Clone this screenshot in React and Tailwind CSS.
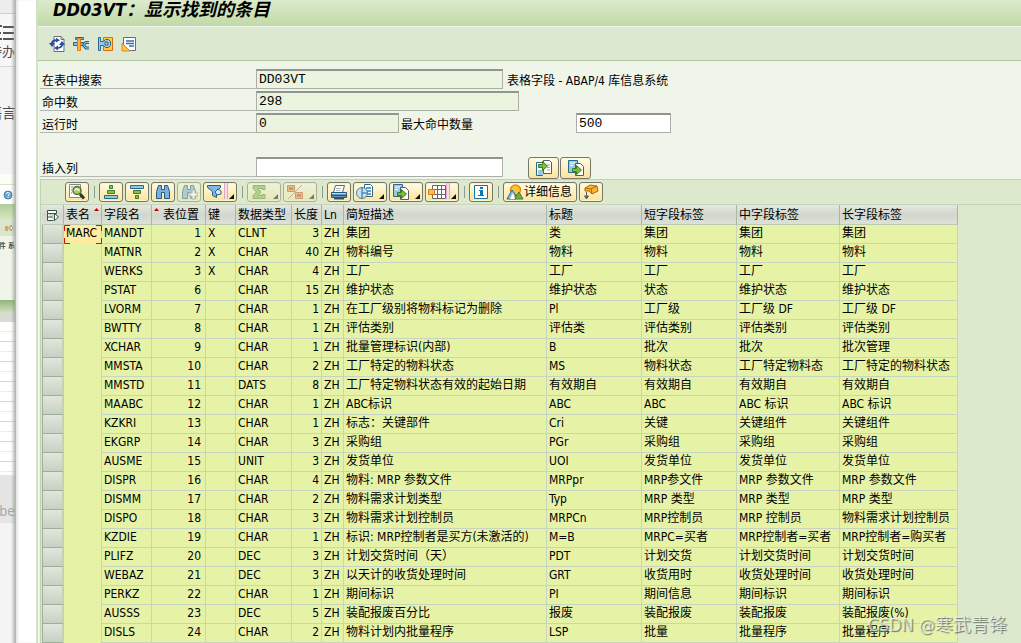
import React from "react";

const ROWS = [
  ["MANDT", 1, "X", "CLNT", 3, "集团", "类", "集团", "集团", "集团"],
  ["MATNR", 2, "X", "CHAR", 40, "物料编号", "物料", "物料", "物料", "物料"],
  ["WERKS", 3, "X", "CHAR", 4, "工厂", "工厂", "工厂", "工厂", "工厂"],
  ["PSTAT", 6, "", "CHAR", 15, "维护状态", "维护状态", "状态", "维护状态", "维护状态"],
  ["LVORM", 7, "", "CHAR", 1, "在工厂级别将物料标记为删除", "Pl", "工厂级", "工厂级 DF", "工厂级 DF"],
  ["BWTTY", 8, "", "CHAR", 1, "评估类别", "评估类", "评估类别", "评估类别", "评估类别"],
  ["XCHAR", 9, "", "CHAR", 1, "批量管理标识(内部)", "B", "批次", "批次", "批次管理"],
  ["MMSTA", 10, "", "CHAR", 2, "工厂特定的物料状态", "MS", "物料状态", "工厂特定物料态", "工厂特定的物料状态"],
  ["MMSTD", 11, "", "DATS", 8, "工厂特定物料状态有效的起始日期", "有效期自", "有效期自", "有效期自", "有效期自"],
  ["MAABC", 12, "", "CHAR", 1, "ABC标识", "ABC", "ABC", "ABC 标识", "ABC 标识"],
  ["KZKRI", 13, "", "CHAR", 1, "标志：关键部件", "Cri", "关键", "关键组件", "关键组件"],
  ["EKGRP", 14, "", "CHAR", 3, "采购组", "PGr", "采购组", "采购组", "采购组"],
  ["AUSME", 15, "", "UNIT", 3, "发货单位", "UOI", "发货单位", "发货单位", "发货单位"],
  ["DISPR", 16, "", "CHAR", 4, "物料: MRP 参数文件", "MRPpr", "MRP参文件", "MRP 参数文件", "MRP 参数文件"],
  ["DISMM", 17, "", "CHAR", 2, "物料需求计划类型", "Typ", "MRP 类型", "MRP 类型", "MRP 类型"],
  ["DISPO", 18, "", "CHAR", 3, "物料需求计划控制员", "MRPCn", "MRP控制员", "MRP 控制员", "物料需求计划控制员"],
  ["KZDIE", 19, "", "CHAR", 1, "标识: MRP控制者是买方(未激活的)", "M=B", "MRPC=买者", "MRP控制者=买者", "MRP控制者=购买者"],
  ["PLIFZ", 20, "", "DEC", 3, "计划交货时间（天）", "PDT", "计划交货", "计划交货时间", "计划交货时间"],
  ["WEBAZ", 21, "", "DEC", 3, "以天计的收货处理时间", "GRT", "收货用时", "收货处理时间", "收货处理时间"],
  ["PERKZ", 22, "", "CHAR", 1, "期间标识", "PI", "期间信息", "期间标识", "期间标识"],
  ["AUSSS", 23, "", "DEC", 5, "装配报废百分比", "报废", "装配报废", "装配报废", "装配报废(%)"],
  ["DISLS", 24, "", "CHAR", 2, "物料计划内批量程序", "LSP", "批量", "批量程序", "批量程序"],
];

function Icon({ children, w = 18 }) {
  return (
    <svg width={w} height="16" viewBox={`0 0 ${w} 16`} className="shrink-0" aria-hidden="true">
      {children}
    </svg>
  );
}

const Refresh = () => (
  <Icon w={16}>
    <path d="M5 .5h7l3 3v12H5z" fill="#fff" stroke="#6d6d78" />
    <path d="M12 .5v3h3" fill="none" stroke="#6d6d78" />
    <path d="M2.500 8.500Q3 4 8 4.200M13.500 7.500Q13 12 8 12" fill="none" stroke="#2450a0" strokeWidth="2" />
    <path d="M0 7h6l-3 4zM10 9h6l-3-4zM7 1.800l4 2.400-4 2.400zM9 9.600l-4 2.400 4 2.400z" fill="#2450a0" />
  </Icon>
);
const Wrench = () => (
  <Icon w={16}>
    <path d="M2.500 1.500h8v2h-8z" fill="#8db9d9" stroke="#286792" />
    <path d="M.5 6.500h10v3H.5z" fill="#8db9d9" stroke="#286792" />
    <path d="M16 6.500h-3l-2 1.500v2l2 2h3" fill="none" stroke="#286792" strokeWidth="3" />
    <path d="M16 6.500h-3l-2 1.500v2l2 2h3" fill="none" stroke="#9cc6e1" />
    <path d="M4.500 2.500h3v12h-3z" fill="#ffb638" stroke="#e07b08" />
  </Icon>
);
const Match = () => (
  <Icon w={16}>
    <path d="M6.500 1.500h9v13h-9z" fill="#ffc94a" stroke="#dc6b12" />
    <path d="M1.500 1.500h2v4h3l2-2h3l2 2v4l-2 2h-3l-2-2h-3v5h-2z" fill="#9ec8df" stroke="#286792" />
    <path d="M8 6h3v3H8z" fill="#ffc94a" stroke="#286792" />
  </Icon>
);
const Note = () => (
  <Icon w={16}>
    <path d="M2.500 1.500h12v13h-12z" fill="#fff" stroke="#6d6d78" />
    <path d="M5 5h8M5 7.500h8M8 10h5" stroke="#376fac" strokeWidth="1.500" />
    <path d="M1 7v8h8z" fill="#ffc24c" stroke="#db8b18" />
  </Icon>
);
const Detail = () => (
  <Icon>
    <path d="M1.500.5h11v13h-11z" fill="#fff" stroke="#86868e" />
    <path d="M3 3h2M3 6h1M3 9h1" stroke="#777" />
    <circle cx="9" cy="6.500" r="4" fill="#a9cf61" stroke="#52732d" strokeWidth="1.500" />
    <path d="M6 7l3-3v2h3" fill="none" stroke="#fff" />
    <path d="M12 10l4 4.500" stroke="#333" strokeWidth="3" />
  </Icon>
);
const Asc = () => (
  <Icon>
    <path d="M7.500 1.500h3v3h-3zM5.500 6.500h7v3h-7z" fill="#8ac33c" stroke="#397d37" />
    <path d="M2.500 11.500h13v3h-13z" fill="#9ac5dc" stroke="#286a8d" />
  </Icon>
);
const Desc = () => (
  <Icon>
    <path d="M2.500 1.500h13v3h-13z" fill="#9ac5dc" stroke="#286a8d" />
    <path d="M5.500 6.500h7v3h-7zM7.500 11.500h3v3h-3z" fill="#8ac33c" stroke="#397d37" />
  </Icon>
);
const BinoShape = () => (
  <path d="M4.500 1.500h3v4h3v-4h3l2 6v7h-5v-6h-3v6h-5v-7z" fill="#7faeda" stroke="#1f5c8c" />
);
const Find = () => <Icon><BinoShape /></Icon>;
const FindNext = () => (
  <Icon>
    <BinoShape />
    <path d="M12 6h3v3h3v3h-3v3h-3v-3H9V9h3z" fill="#fff" stroke="#7a8992" />
  </Icon>
);
const Filter = () => (
  <Icon>
    <path d="M1.500 1.500h13v2l-4 4v6l-4-2v-4l-5-4z" fill="#83b6dc" stroke="#205f91" />
    <path d="M9 8l3-3 3 2v3l-4 1z" fill="#dcebf5" stroke="#205f91" />
  </Icon>
);
const Sum = () => (
  <Icon>
    <path d="M3 1.500h12v4h-3v-1H8l3 3.500-3 3.500h4v-1h3v4H3v-3l3.500-3.500L3 4.500z" fill="#8abb45" stroke="#4a8c34" />
  </Icon>
);
const Sub = () => (
  <Icon>
    <path d="M1.500 1.500h7v6h-7zM9.500 8.500h7v6h-7z" fill="#ee9a35" stroke="#c94b20" />
    <path d="M3 4.500h4M11 11.500h4" stroke="#a92a1d" strokeWidth="2" />
    <path d="M2 15L16 1" stroke="#9b7d7d" />
  </Icon>
);
const Print = () => (
  <Icon>
    <path d="M5.500 1.500h9l-2 7h-9z" fill="#fff" stroke="#4e6c84" />
    <path d="M6 4.500h5M6 6.500h4" stroke="#a5b5c4" />
    <path d="M1.500 8.500h15v5h-15z" fill="#b9d8eb" stroke="#20577e" />
    <path d="M2 11.500h14M4 14.500h10" stroke="#20577e" strokeWidth="2" />
  </Icon>
);
const View = () => (
  <Icon>
    <path d="M8.500.5h6l2 2v10h-8z" fill="#fff" stroke="#29658c" />
    <path d="M10 4h5M10 7h5M10 10h5" stroke="#347aac" strokeWidth="1.500" />
    <circle cx="6" cy="9" r="5.500" fill="#c8e1ef" stroke="#56829d" />
    <path d="M6 3.500v11M6 9h5" stroke="#286a8d" />
  </Icon>
);
const Export = () => (
  <Icon>
    <path d="M1.500.5h9v12h-9z" fill="#9fc7df" stroke="#286a8d" />
    <path d="M3 3h5M3 5.500h3" stroke="#fff" />
    <path d="M8.500 3.500h5l3 3v9h-8z" fill="#fff" stroke="#555b60" />
    <path d="M5.500 8.500h4v-3l5 4.500-5 4.500v-3h-4z" fill="#81bd31" stroke="#397d27" />
  </Icon>
);
const Import = () => (
  <Icon>
    <path d="M1.500 2.500h6v13h-6z" fill="#fff" stroke="#286a8d" />
    <path d="M3 10h5v5H3z" fill="#9fc7df" />
    <path d="M8.500.5h6l2 2v11h-8z" fill="#fff" stroke="#555b60" />
    <path d="M12 5h3M12 7.500h3M12 10h3" stroke="#9da9b3" />
    <path d="M3.500 4.500h4v-3l5 4.500-5 4.500v-3h-4z" fill="#81bd31" stroke="#397d27" />
  </Icon>
);
const Layout = () => (
  <Icon>
    <path d="M4.500 1.500h13v13h-13zM9.500 1.500v13M13.500 1.500v13M4.500 5.500h13M4.500 10.500h13" fill="#fff" stroke="#666" />
    <path d="M.5 5.500h6v5h-6z" fill="#ffbd52" stroke="#dd7516" />
  </Icon>
);
const Info = () => (
  <Icon>
    <path d="M2.500 1.500h13v13h-13z" fill="#fff" stroke="#0e76a8" />
    <path d="M8 3h3v2H8zM7 6h4v5h1v1H6v-1h2V7H7z" fill="#0b78b4" />
  </Icon>
);
const Scene = () => (
  <Icon>
    <circle cx="9.500" cy="6" r="5" fill="#ffc530" stroke="#ee8617" strokeWidth="1.500" />
    <path d="M1 15L6 6l3 4 1 5z" fill="#8bbedf" stroke="#286a9c" />
    <path d="M8 15l5-7 4 7z" fill="#72ad45" stroke="#397d37" />
    <path d="M4 15l3-6 2 6z" fill="#fff" />
  </Icon>
);
const Truck = () => (
  <Icon>
    <path d="M3 4l5-3 7 1 1 5-6 3-3-3H3z" fill="#ffb52b" stroke="#a76a09" />
    <path d="M3 4l6 1 1 5M9 5l6-3" fill="none" stroke="#a76a09" />
    <path d="M4.500 8v6M2.500 12h4l-2 3z" fill="#58616a" stroke="#58616a" />
  </Icon>
);

function Tool({ label, icon: Glyph, menu, stripe, disabled, children }) {
  return (
    <button
      type="button"
      aria-label={label}
      disabled={disabled}
      className="flex h-5 min-w-6 items-center rounded-[3px] border border-[#77766b] bg-linear-to-b from-[#fffbe4] to-[#fbe398] px-0.5 shadow-[inset_0_0_0_1px_#fff3c4] disabled:opacity-50"
    >
      <Glyph />
      {menu && (
        <span className="flex h-full w-2.5 items-end justify-end pb-0.5">
          {stripe && <span className="mr-px h-4 w-1 border-x border-[#dfa3d0] bg-[#f7dfdf]" />}
          <svg width="5" height="5" viewBox="0 0 5 5" className="shrink-0" aria-hidden="true">
            <path d="M5 0v5H0z" fill="#111" />
          </svg>
        </span>
      )}
      {children}
    </button>
  );
}

const Sep = () => (
  <span className="flex w-1.5 justify-center">
    <span className="h-3 w-px bg-[#929b8b]" />
  </span>
);

const MainTool = ({ label, icon: Glyph }) => (
  <button type="button" aria-label={label} className="flex">
    <Glyph />
  </button>
);

const FIELD =
  "h-5 border border-t-2 border-[#abaea7] border-t-[#92958f] px-0.5 font-['Liberation_Mono','Noto_Sans_CJK_SC',monospace] text-[13px] leading-4 outline-none";

function Label({ id, children }) {
  return (
    <label htmlFor={id} className="h-5 w-[216px] shrink-0 border-b border-[#b5b8b1] pl-0.5">
      {children}
    </label>
  );
}

const TH =
  "h-5 overflow-hidden border-b border-r border-b-[#bccab4] border-r-[#abb5a4] bg-linear-to-b from-[#e4e8df] via-[#d1d7cd] to-[#dde1d8] px-0.5 pt-px pb-0 text-left font-normal leading-[18px]";
const TD = "h-[19px] overflow-visible border-b border-r border-[#c7d4bf] bg-[#e6f3a7] px-0.5 pt-0 pb-0.5 leading-4";

const SortMark = () => (
  <svg width="5" height="3" viewBox="0 0 5 3" className="mt-0.5 shrink-0" aria-hidden="true">
    <path d="M2.500 0L5 3H0z" fill="#c00000" />
  </svg>
);

function Backdrop() {
  return (
    <aside className="relative w-4 shrink-0 overflow-hidden border-r border-[#aebba6] bg-[#f4f4f4] text-[13px] text-[#4b4b52]">
      <div className="h-3.5 border-b border-[#cfcfcf] bg-[#ededed]" />
      <div className="h-[53px] border-b border-[#d8d8d8] bg-[#f7f7f7] pt-2.5">
        <svg width="15" height="18" viewBox="0 0 15 18" aria-hidden="true">
          <path d="M0 2h2M3 3h11M0 9h1M3 9h11M0 15h2M3 15h11" stroke="#54545e" strokeWidth="2" />
        </svg>
        <div className="flex h-5 w-[15px] justify-end leading-5">
          <span className="whitespace-nowrap">待办</span>
        </div>
      </div>
      <div className="flex h-[107px] w-4 justify-end pt-9">
        <span className="text-[14px] leading-5 whitespace-nowrap">语言</span>
      </div>
      <div className="h-2.5 bg-[#fbfdf7]" />
      <div className="flex h-5 items-center justify-end border-t border-[#d8e6cd] bg-white pr-0.5">
        <svg width="10" height="10" viewBox="0 0 10 10" aria-hidden="true">
          <circle cx="5" cy="5" r="4" fill="#6fa5d0" stroke="#4a7fac" />
          <path d="M3.500 4q0-2 2-1.500t0 2.500v1M5 7v1" fill="none" stroke="#fff" />
        </svg>
      </div>
      <div className="h-4 bg-linear-to-b from-[#b0cd9b] to-[#d5e8c2]" />
      <div className="flex h-4 items-center bg-[#dbe6cf] pl-1">
        <svg width="10" height="8" viewBox="0 0 10 8" aria-hidden="true">
          <path d="M1 2h3v5H1z" fill="#f0a23a" />
          <path d="M5 3h2V1l2 3-2 3V5H5z" fill="#fff" stroke="#998" />
        </svg>
      </div>
      <div className="flex h-16 w-[15px] justify-end bg-[#eff5e9] pt-1">
        <span className="text-[7px] leading-3 font-bold whitespace-nowrap">件 系</span>
      </div>
      <div className="h-3 bg-linear-to-b from-[#93b47d] to-[#cae0b6]" />
      <div className="h-2.5 bg-[#d8dcd3]" />
      <div className="h-[153px] bg-white bg-[repeating-linear-gradient(to_bottom,#fff_0,#fff_9px,#ecefe6_9px,#ecefe6_10px,#fff_10px,#fff_19px,#d3dbca_19px,#d3dbca_20px)]" />
      <div className="flex h-12 items-center justify-end bg-[#e5e5e5] pt-6 text-[14px] text-[#a9a9a9]">
        <span className="leading-4">be</span>
      </div>
      <div className="absolute inset-y-0 right-0 w-1 bg-linear-to-r from-transparent to-[#8e958a]/60" />
    </aside>
  );
}

export default function App() {
  return (
    <div className="relative flex h-screen overflow-hidden bg-white font-['DejaVu_Sans_Condensed','Noto_Sans_CJK_SC',sans-serif] text-xs text-black">
      <Backdrop />
      <div className="w-5 shrink-0 bg-white shadow-[inset_2px_0_2px_#e4e7e2]" />
      <main className="flex min-w-0 grow flex-col border-l-2 border-[#d2e2c6] bg-[#eff5e9]">
        <header className="h-[27px] shrink-0 border-b border-[#f3f8ec] bg-linear-to-b from-[#dcebcc] to-[#c1d9a7] pl-[15px]">
          <h1 className="text-[18px] leading-5 font-bold italic">DD03VT：显示找到的条目</h1>
        </header>
        <div className="flex h-[34px] shrink-0 items-center gap-2 border-b border-[#b1c6a0] bg-[#dde8d0] pl-[11px]">
          <MainTool label="刷新" icon={Refresh} />
          <MainTool label="工具" icon={Wrench} />
          <MainTool label="匹配" icon={Match} />
          <MainTool label="注释" icon={Note} />
        </div>

        <section className="shrink-0 pt-2 pl-0.5 leading-6">
          <div className="flex h-[22px]">
            <Label id="table">在表中搜索</Label>
            <input id="table" readOnly defaultValue="DD03VT" className={`${FIELD} w-[247px] bg-[#ebf4df]`} />
            <span className="pl-1">表格字段 - ABAP/4 库信息系统</span>
          </div>
          <div className="flex h-[22px]">
            <Label id="hits">命中数</Label>
            <input id="hits" readOnly defaultValue="298" className={`${FIELD} w-[263px] bg-[#ebf4df]`} />
          </div>
          <div className="flex h-[22px]">
            <Label id="runtime">运行时</Label>
            <input id="runtime" readOnly defaultValue="0" className={`${FIELD} w-[143px] bg-[#ebf4df]`} />
            <label htmlFor="max" className="w-[177px] pl-0.5">最大命中数量</label>
            <input id="max" defaultValue="500" className={`${FIELD} w-[95px] bg-white`} />
          </div>
          <div className="mt-[22px] flex h-[22px]">
            <Label id="insert">插入列</Label>
            <input id="insert" className={`${FIELD} w-[247px] bg-white`} />
            <div className="ml-[25px] flex gap-px">
              <button type="button" aria-label="插入" className="flex h-[22px] w-[31px] items-center justify-center rounded-[3px] border border-[#77766b] bg-linear-to-b from-[#fffbe4] to-[#fbe398]">
                <Import />
              </button>
              <button type="button" aria-label="追加" className="flex h-[22px] w-[31px] items-center justify-center rounded-[3px] border border-[#77766b] bg-linear-to-b from-[#fffbe4] to-[#fbe398]">
                <Export />
              </button>
            </div>
          </div>
        </section>

        <section className="ml-0.5 grow border-t border-l border-[#bfd2b2] bg-[#dce9cd]">
          <div className="flex h-[25px] items-center gap-0.5 border-b border-[#c5d4bb] pl-6">
            <Tool label="明细" icon={Detail} />
            <Sep />
            <Tool label="升序排序" icon={Asc} />
            <Tool label="降序排序" icon={Desc} />
            <Tool label="查找" icon={Find} />
            <Tool label="查找下一个" icon={FindNext} disabled />
            <Tool label="过滤器" icon={Filter} menu stripe />
            <Sep />
            <Tool label="总计" icon={Sum} menu disabled />
            <Tool label="小计" icon={Sub} menu disabled />
            <Sep />
            <Tool label="打印" icon={Print} />
            <Tool label="视图" icon={View} menu />
            <Tool label="导出" icon={Export} menu />
            <Tool label="布局" icon={Layout} menu stripe />
            <Sep />
            <Tool label="信息" icon={Info} />
            <Sep />
            <Tool label="详细信息" icon={Scene}>
              <span className="pr-0.5 text-[12px] leading-4 whitespace-nowrap">详细信息</span>
            </Tool>
            <Tool label="传输" icon={Truck} />
          </div>
          <div className="pl-px">
            <table className="w-[916px] table-fixed border-separate border-spacing-0 whitespace-nowrap">
              <colgroup>
                <col className="w-[22px]" />
                <col className="w-[38px]" />
                <col className="w-[50px]" />
                <col className="w-[54px]" />
                <col className="w-[30px]" />
                <col className="w-[56px]" />
                <col className="w-[30px]" />
                <col className="w-[22px]" />
                <col className="w-[203px]" />
                <col className="w-[95px]" />
                <col className="w-[95px]" />
                <col className="w-[103px]" />
                <col className="w-[118px]" />
              </colgroup>
              <thead>
                <tr>
                  <th className={TH} aria-label="选择">
                    <svg width="14" height="13" viewBox="0 0 14 13" className="ml-0.5" aria-hidden="true">
                      <path d="M1.500 1.500h9v3h-9zM1.500 4.500v7h6M1.500 8h5" fill="#fff" stroke="#35543f" />
                      <path d="M8.500 4.500v7l4-3.500z" fill="#fff" stroke="#35543f" />
                    </svg>
                  </th>
                  <th className={TH}><span className="flex h-[18px] justify-between">表名<SortMark /></span></th>
                  <th className={TH}>字段名</th>
                  <th className={TH}><span className="flex h-[18px] justify-between pr-1"><SortMark />表位置</span></th>
                  <th className={TH}>键</th>
                  <th className={TH}>数据类型</th>
                  <th className={TH}>长度</th>
                  <th className={TH}>Ln</th>
                  <th className={TH}>简短描述</th>
                  <th className={TH}>标题</th>
                  <th className={TH}>短字段标签</th>
                  <th className={TH}>中字段标签</th>
                  <th className={TH}>长字段标签</th>
                </tr>
              </thead>
              <tbody>
                {ROWS.map(([name, pos, key, type, len, desc, ...titles], i) => (
                  <tr key={name}>
                    <td className="h-[19px] border-r-2 border-b border-l border-[#9fae98] border-r-[#c3d1b7] bg-linear-to-b from-[#e2e6dd] to-[#c8d0c3] p-0" />
                    {i === 0 ? (
                      <td className="relative h-[19px] border-r border-[#c7d4bf] bg-[#ffeca0] px-0.5 pt-0 pb-[3px] leading-4">
                        MARC
                        <svg viewBox="0 0 38 19" className="absolute inset-0 h-[19px] w-[38px]" aria-hidden="true">
                          <path d="M6 .5H.5V6M32 .5h5.500V6M6 18.500H.5V13M32 18.500h5.500V13" fill="none" stroke="#d01010" />
                        </svg>
                      </td>
                    ) : (
                      <td className="h-[19px] border-r border-[#c7d4bf] bg-[#e6f3a7] p-0" />
                    )}
                    <td className={TD}>{name}</td>
                    <td className={`${TD} text-right`}><span className="pr-0.5">{pos}</span></td>
                    <td className={TD}>{key}</td>
                    <td className={TD}>{type}</td>
                    <td className={`${TD} text-right`}>{len}</td>
                    <td className={TD}>ZH</td>
                    <td className={TD}>{desc}</td>
                    {titles.map((t, j) => (
                      <td key={j} className={TD}>{t}</td>
                    ))}
                  </tr>
                ))}
              </tbody>
            </table>
          </div>
        </section>
      </main>
      <div className="pointer-events-none absolute right-3.5 bottom-1.5 text-[18px] leading-6 text-white/60 [text-shadow:1px_1px_1px_#6b7668]">
        CSDN @寒武青锋
      </div>
    </div>
  );
}
